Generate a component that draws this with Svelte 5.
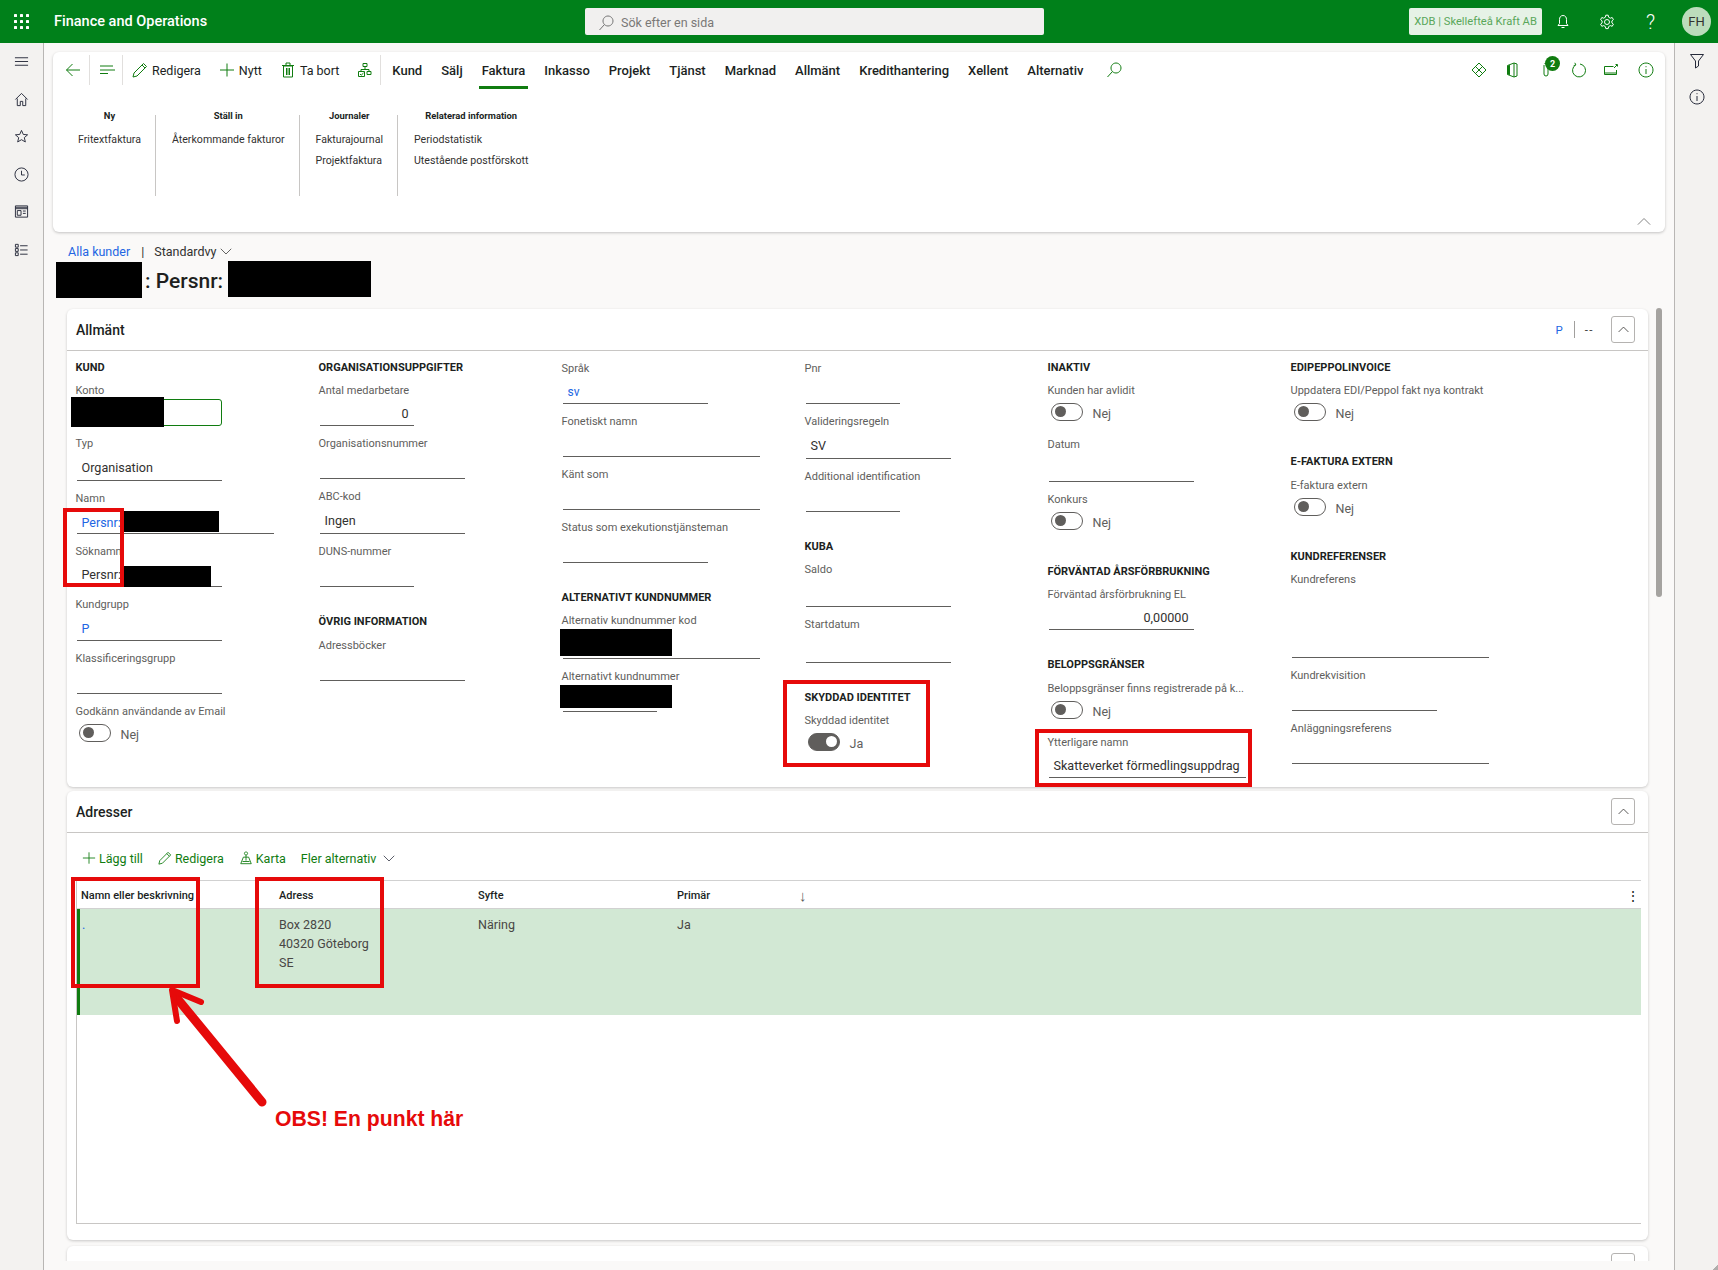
<script>
  const tabs = ['Kund','Sälj','Faktura','Inkasso','Projekt','Tjänst','Marknad','Allmänt','Kredithantering','Xellent','Alternativ'];
  const ribbon = [
    { title:'Ny', items:['Fritextfaktura'] },
    { title:'Ställ in', items:['Återkommande fakturor'] },
    { title:'Journaler', items:['Fakturajournal','Projektfaktura'] },
    { title:'Relaterad information', items:['Periodstatistik','Utestående postförskott'] }
  ];
  const h = (text, mt=26) => ({ t:'h', text, mt });
  const f = (label, o={}) => ({ t:'f', label, mt:9, w:'m', ih:28, ...o });
  const tg = (label, mt=7, val='Nej', on=false) => ({ t:'s', label, mt, val, on });
  const columns = [
    [ h('KUND',0), f('Konto',{mt:7,focus:true,ih:27}), f('Typ',{value:'Organisation',ih:30}),
      f('Namn',{value:'Persnr:',link:true,w:'l'}), f('Söknamn',{value:'Persnr:'}),
      f('Kundgrupp',{value:'P',link:true,ih:29}), f('Klassificeringsgrupp'), tg('Godkänn användande av Email',9) ],
    [ h('ORGANISATIONSUPPGIFTER',0), f('Antal medarbetare',{mt:7,w:'s',value:'0',num:true}), f('Organisationsnummer'),
      f('ABC-kod',{value:'Ingen',ih:30}), f('DUNS-nummer',{w:'s'}), h('ÖVRIG INFORMATION'), f('Adressböcker',{mt:8}) ],
    [ f('Språk',{mt:1,value:'sv',link:true,small:true}), f('Fonetiskt namn',{w:'l'}), f('Känt som',{w:'l'}),
      f('Status som exekutionstjänsteman'), h('ALTERNATIVT KUNDNUMMER'),
      f('Alternativ kundnummer kod',{mt:7,w:'l',ih:31}), f('Alternativt kundnummer',{w:'s'}) ],
    [ f('Pnr',{mt:1,w:'s'}), f('Valideringsregeln',{value:'SV',ih:30}), f('Additional identification',{w:'s'}),
      h('KUBA'), f('Saldo',{mt:7,ih:30}), f('Startdatum',{ih:31}), h('SKYDDAD IDENTITET'),
      tg('Skyddad identitet',7,'Ja',true) ],
    [ h('INAKTIV',0), tg('Kunden har avlidit'), f('Datum',{mt:10,ih:30}), tg('Konkurs',9), h('FÖRVÄNTAD ÅRSFÖRBRUKNING',28),
      f('Förväntad årsförbrukning EL',{mt:7,value:'0,00000',num:true}), h('BELOPPSGRÄNSER'),
      tg('Beloppsgränser finns registrerade på k...',8), f('Ytterligare namn',{mt:10,w:'l',value:'Skatteverket förmedlingsuppdrag'}) ],
    [ h('EDIPEPPOLINVOICE',0), tg('Uppdatera EDI/Peppol fakt nya kontrakt'), h('E-FAKTURA EXTERN',27), tg('E-faktura extern',8),
      h('KUNDREFERENSER',27), f('Kundreferens',{mt:7,w:'l',ih:71}), f('Kundrekvisition'), f('Anläggningsreferens',{w:'l'}) ]
  ];
  const redactions = [
    [56,262,86,36],[228,261,143,36],[71,397,93,30],[123.5,511,95.5,21],[123.5,566,87.5,21],[560,629,112,27],[560,685,112,23]
  ];
  const redBoxes = [
    [63,507.5,60.5,79],[783,680,147,86.5],[1035,729,217,58],[71,877,129,111],[255,877,129,111]
  ];
  const sideIcons = [
    'M1 4h14M1 8h14M1 12h14',
    'M1.5 8 8 1.5 14.5 8M3.5 7v7.5h3.200v-4.500h2.600v4.500h3.200V7',
    'M8 1.500l1.900 4.300 4.600.4-3.500 3 1.100 4.600L8 11.400l-4.100 2.400L5 9.200l-3.500-3 4.600-.4z',
    'M8 1a7 7 0 1 0 0 14A7 7 0 0 0 8 1zM8 4v4.500h3.500',
    'M1.500 2h13v12h-13zM1.500 3.500h13M1.500 5h13M3.500 7h4v5h-4zM9.500 7.500h3M9.500 10h3',
    'M1.500 2.500h3v3h-3zM1.500 7h3v3h-3zM1.500 11.500h3v3h-3zM6.500 4h8M6.500 8.500h8M6.500 13h8'
  ];
  const plus = 'M8 1.500v13M1 8h14';
  const pencil = 'M11.500 1.500l3 3L5 14l-4 1 1-4zM10 3l3 3';
  const info = 'M8 1a7 7 0 1 0 .01 0zM8 7v5M8 4.200v1';
</script>

{#snippet icon(d, cls = '')}
  <svg class="ico {cls}" viewBox="0 0 16 16" aria-hidden="true"><path d={d} /></svg>
{/snippet}

<div class="app">
  <header class="top">
    <svg class="waffle" viewBox="0 0 15 15" aria-hidden="true">
      {#each [1.500,7.500,13.500] as y}
        {#each [1.500,7.500,13.500] as x}<rect x={x-1.500} y={y-1.500} width="3" height="3" rx=".6" />{/each}
      {/each}
    </svg>
    <span class="brand">Finance and Operations</span>
    <div class="search">
      {@render icon('M10 1a5 5 0 1 1-.01 0zM6.300 9.700 1.500 15', 'gray')}
      <span>Sök efter en sida</span>
    </div>
    <button class="company">XDB | Skellefteå Kraft AB</button>
    <div class="topicons">
      {@render icon('M8 1.500c-2.500 0-3.500 2-3.500 4v4L3 11.500h10L11.500 9.500v-4c0-2-1-4-3.500-4zM6.500 13.500h3', 'white')}
      {@render icon('M8 5.500a2.500 2.500 0 1 0 0 5 2.500 2.500 0 0 0 0-5zM6.800 1.200h2.400l.4 2 1.700 1 1.900-.7 1.200 2.100-1.500 1.300v2l1.500 1.300-1.200 2.100-1.900-.7-1.700 1-.4 2H6.800l-.4-2-1.700-1-1.900.7-1.200-2.100 1.500-1.300v-2L1.600 5.600l1.200-2.100 1.900.7 1.700-1z', 'white')}
      <span class="q">?</span>
    </div>
    <div class="avatar">FH</div>
  </header>

  <div class="body">
    <nav class="side">
      {#each sideIcons as d}
        <span class="sidebtn">{@render icon(d, 'navy')}</span>
      {/each}
    </nav>

    <main class="main">
      <section class="ribbon">
        <div class="cmdbar">
          <span class="cmd iconly">{@render icon('M15 8H1.500M7.500 2 1.500 8l6 6', 'green')}</span>
          <span class="vsep"></span>
          <span class="cmd iconly lines">{@render icon('M1 4h13M1 8h15M1 11.500h8', 'green')}</span>
          <span class="vsep"></span>
          <span class="cmd">{@render icon(pencil, 'green')}Redigera</span>
          <span class="cmd">{@render icon(plus, 'green')}Nytt</span>
          <span class="cmd">{@render icon('M3.500 4h9v11h-9zM2 3.500h12M6 1h4v2.500H6zM6.500 6v7M8 6v7M9.500 6v7', 'green')}Ta bort</span>
          <span class="cmd iconly org">{@render icon('M6 1.500h4v3H6zM8 4.500v3M4 9V7.500h8V9M1.500 9.500h6v5h-6zM10 9.500h4v3h-4zM3 12l1.200 1.200L6.500 11', 'green')}</span>
          <span class="vsep last"></span>
          <div class="tabs">
            {#each tabs as t}
              <span class="tab" class:active={t === 'Faktura'}>{t}</span>
            {/each}
          </div>
          <span class="tabsearch">{@render icon('M10 1a5 5 0 1 1-.01 0zM6.300 9.700 1.500 15', 'green')}</span>
          <div class="cmdright">
            {@render icon('M8 1l7 7-7 7-7-7zM4.500 4.500l7 7M11.500 4.500l-7 7', 'green')}
            <svg class="ico green" viewBox="0 0 16 16" aria-hidden="true"><path d="M10 1 3.500 3.500v9L10 15l3-1V2zM10 1v14" /><path class="solid" d="M3.500 3.500 6 3v10l-2.500-.5z" /></svg>
            <span class="clip">
              {@render icon('M6 3v9a2 2 0 0 0 4 0V3.500a3 3 0 0 0-3.500-2', 'green')}
              <b>2</b>
            </span>
            {@render icon('M4.800 .8 5.800 2.800 3.600 3.800M5.800 2.800A6.500 6.500 0 1 0 10 2', 'green')}
            {@render icon('M1.500 4.500h9M1.500 4.500v8h12V8M1.500 11h12M11 6l3-3M12.500 2.500h2v2', 'green')}
            <span class="lastico">{@render icon(info, 'green')}</span>
          </div>
        </div>
        <div class="groups">
          {#each ribbon as g}
            <div class="group">
              <div class="gtitle">{g.title}</div>
              {#each g.items as it}<div class="gitem">{it}</div>{/each}
            </div>
          {/each}
        </div>
        <span class="collapse">{@render icon('M1 11l7-7 7 7', 'gray')}</span>
      </section>

      <div class="crumbs">
        <span class="link">Alla kunder</span><span class="pipe">|</span><span>Standardvy</span>
        {@render icon('M1 5l7 7 7-7', 'dark chev')}
      </div>
      <h1 class="title">: Persnr:</h1>

      <div class="scroll">
        <section class="card">
          <div class="cardhead">
            <h2>Allmänt</h2>
            <div class="summary"><span class="link">P</span><span class="thin"></span><span class="dashes">--</span></div>
            <span class="toggleup">{@render icon('M2 11l6-6 6 6', 'dark')}</span>
          </div>
          <div class="fields">
            {#each columns as col}
              <div class="col">
                {#each col as it}
                  {#if it.t === 'h'}
                    <div class="head" style="margin-top:{it.mt}px">{it.text}</div>
                  {:else if it.t === 's'}
                    <div class="field" style="margin-top:{it.mt}px">
                      <div class="label">{it.label}</div>
                      <div class="switchrow">
                        <span class="switch" class:on={it.on}><i></i></span>
                        <span class="swval">{it.val}</span>
                      </div>
                    </div>
                  {:else}
                    <div class="field" style="margin-top:{it.mt}px">
                      <div class="label">{it.label}</div>
                      <div class="input {it.w}" class:focus={it.focus} class:num={it.num} class:link={it.link} class:small={it.small} style="height:{it.ih}px">{it.value ?? ''}</div>
                    </div>
                  {/if}
                {/each}
              </div>
            {/each}
          </div>
        </section>

        <section class="card second">
          <div class="cardhead">
            <h2>Adresser</h2>
            <span class="toggleup">{@render icon('M2 11l6-6 6 6', 'dark')}</span>
          </div>
          <div class="gridbar">
            <span class="gcmd">{@render icon(plus, 'green')}Lägg till</span>
            <span class="gcmd">{@render icon(pencil, 'green')}Redigera</span>
            <span class="gcmd">{@render icon('M8 1a1.800 1.800 0 1 0 .01 0zM8 4.500V11M5 7h6l3 7.500H2zM4 12h8', 'green')}Karta</span>
            <span class="gcmd">Fler alternativ{@render icon('M1 5l7 7 7-7', 'navy chev')}</span>
          </div>
          <div class="grid">
            <div class="ghead">
              <span>Namn eller beskrivning</span><span>Adress</span><span>Syfte</span><span>Primär</span>
              <span class="sort">↓</span><span class="more">⋮</span>
            </div>
            <div class="grow">
              <span class="link dot">.</span>
              <span class="addr">Box 2820<br />40320 Göteborg<br />SE</span>
              <span>Näring</span>
              <span>Ja</span>
            </div>
          </div>
        </section>

        <section class="card third">
          <div class="cardhead"><h2></h2><span class="toggleup"></span></div>
        </section>
      </div>
      <span class="scrollthumb"></span>
    </main>

    <aside class="rail">
      {@render icon('M1.500 1.500h13L9.500 8v5l-3 2V8z', 'navy')}
      {@render icon(info, 'navy')}
    </aside>
  </div>

  {#each redactions as r}
    <div class="black" style="left:{r[0]}px;top:{r[1]}px;width:{r[2]}px;height:{r[3]}px"></div>
  {/each}
  {#each redBoxes as r}
    <div class="redbox" style="left:{r[0]}px;top:{r[1]}px;width:{r[2]}px;height:{r[3]}px"></div>
  {/each}
  <svg class="arrow" viewBox="0 0 1718 1270" aria-hidden="true">
    <path class="shaft" d="M262 1102 176 997" />
    <path class="headp" d="M201 1002 172 990 177 1021" />
  </svg>
  <div class="obs">OBS! En punkt här</div>
  <div class="corner"></div>
</div>

<style>
  :global(body) { margin: 0; background: #faf9f8; }
  .app {
    position: relative; width: 1718px; height: 1270px; overflow: hidden;
    font-family: Roboto, "Noto Sans", sans-serif; font-size: 13px; color: #323130;
    background: #faf9f8;
  }
  .ico { width: 16px; height: 16px; fill: none; stroke: currentColor; stroke-width: 1; flex: none; display: block; }
  .solid { fill: currentColor; fill-rule: evenodd; stroke: none; }
  .green { color: #107c10; }
  .gray { color: #737373; }
  .white { color: #fff; }
  .dark { color: #323130; }
  .navy { color: #252a3a; }
  .link { color: #2266e3; }

  .top { height: 43px; background: #00801a; display: flex; align-items: center; color: #fff; }
  .waffle { width: 15px; height: 15px; fill: #fff; margin-left: 14px; flex: none; }
  .brand { margin-left: 25px; font-size: 14.500px; font-weight: 500; width: 155px; white-space: nowrap; }
  .search {
    margin-left: 376px; width: 459px; height: 27px; background: #f1f0ef; border-radius: 2px;
    display: flex; align-items: center; color: #7a7876; font-size: 12.500px; box-sizing: border-box; padding: 2px 0 0 13px; gap: 7px;
  }
  .company {
    margin-left: 365px; width: 133px; height: 27px; border: 0; border-radius: 2px; padding: 0;
    background: #e6f2e6; color: #5aa75a; font: 11.200px Roboto, sans-serif; white-space: nowrap;
  }
  .topicons { margin-left: 13px; display: flex; align-items: center; gap: 28px; width: 128px; }
  .q { font-size: 20px; font-weight: 300; margin-left: 3px; line-height: 16px; }
  .avatar {
    position: absolute; left: 1682px; top: 7px; width: 29px; height: 29px; border-radius: 50%;
    background: #bcdcbc; color: #323130; font-size: 13px; display: flex; align-items: center; justify-content: center;
  }

  .body { display: flex; height: 1227px; }
  .side { width: 43px; flex: none; border-right: 1px solid #b8b6b4; background: #f3f2f0; box-sizing: content-box; }
  .sidebtn { height: 37.500px; display: flex; align-items: center; justify-content: center; }
  .sidebtn .ico { width: 15px; height: 15px; }
  .rail {
    width: 43px; flex: none; border-left: 1px solid #b8b6b4; background: #f3f2f0;
    display: flex; flex-direction: column; align-items: center; padding-top: 10px; gap: 20px;
  }
  .main { flex: 1; min-width: 0; display: flex; flex-direction: column; position: relative; }

  .ribbon {
    margin: 9px 9px 0 9px; height: 180px; background: #fff; border-radius: 6px; position: relative;
    box-shadow: 0 1px 3px rgba(0,0,0,.22); flex: none;
  }
  .cmdbar { height: 36px; display: flex; align-items: center; padding-left: 12px; position: relative; font-size: 12.500px; color: #201f1e; }
  .cmd { display: flex; align-items: center; gap: 4px; white-space: nowrap; margin-right: 18px; height: 30px; }
  .cmd.iconly { margin-right: 8px; }
  .cmd.lines { margin-right: 7px; }
  .cmd.org { margin-right: 7px; }
  .vsep { width: 1px; height: 30px; background: #e1dfdd; margin-right: 9px; flex: none; }
  .vsep.last { margin-right: 8px; }
  .tabs { display: flex; gap: 13px; font-weight: 500; font-size: 13px; }
  .tab { position: relative; padding: 0 3px; white-space: nowrap; height: 36px; display: flex; align-items: center; }
  .tab.active::after { content: ''; position: absolute; left: 0; right: 0; bottom: -1px; height: 3px; background: #107c10; }
  .tabsearch { margin-left: 20px; }
  .cmdright { position: absolute; left: 1418px; top: 10px; display: flex; gap: 17px; }
  .clip { position: relative; left: 1px; }
  .clip b {
    position: absolute; left: 7px; top: -6px; width: 15px; height: 15px; border-radius: 50%; background: #107c10; color: #fff;
    font-size: 9px; font-weight: 700; display: flex; align-items: center; justify-content: center;
  }
  .lastico { margin-left: 2px; }
  .groups { display: flex; padding: 27px 0 0 9px; font-size: 10.600px; color: #323130; }
  .group { padding: 0 14px 0 16px; height: 81px; border-right: 1px solid #c8c6c4; box-sizing: border-box; }
  .group:last-child { border-right: 0; }
  .gtitle { font-size: 9.400px; font-weight: 700; text-align: center; height: 14px; line-height: 14px; margin: -6px 0 6px; color: #201f1e; }
  .gitem { height: 21px; line-height: 21px; white-space: nowrap; }
  .collapse { position: absolute; right: 14px; top: 163px; }
  .collapse .ico { width: 14px; height: 14px; }

  .crumbs { margin: 9px 0 0 24px; height: 20px; display: flex; align-items: center; font-size: 12.500px; flex: none; }
  .pipe { margin: 0 10px 0 11px; }
  .chev { width: 12px; height: 12px; margin-left: 4px; }
  .title { margin: 1px 0 0; padding-left: 101px; height: 38px; line-height: 38px; font-size: 21px; font-weight: 500; color: #201f1e; flex: none; }

  .scroll { flex: 1; margin-bottom: 9px; padding: 9px 26px 0 23px; overflow: hidden; min-height: 0; }
  .scrollthumb { position: absolute; left: 1612px; top: 265px; width: 6px; height: 289px; border-radius: 3px; background: #a5a3a0; }
  .card { background: #fff; border-radius: 6px; box-shadow: 0 1px 3px rgba(0,0,0,.2); }
  .second { margin-top: 4px; height: 449px; display: flex; flex-direction: column; }
  .third { margin-top: 6px; height: 100px; }
  .cardhead {
    height: 41px; border-bottom: 1px solid #c8c6c4; display: flex; align-items: center; padding: 0 13px 0 9px; box-sizing: content-box;
  }
  .cardhead h2 { margin: 0; font-size: 14px; font-weight: 500; color: #201f1e; flex: 1; }
  .summary { display: flex; align-items: center; font-size: 11.500px; margin-right: 17px; }
  .dashes { letter-spacing: 1.500px; font-variant-ligatures: none; }
  .thin { width: 1px; height: 17px; background: #a19f9d; margin: 0 10px 0 11px; }
  .toggleup {
    width: 24px; height: 27px; box-sizing: border-box; border: 1px solid #b5b3b1; border-radius: 3px;
    display: flex; align-items: center; justify-content: center;
  }
  .toggleup .ico { width: 13px; height: 13px; }

  .fields { display: grid; grid-template-columns: repeat(6, 243px); padding: 8px 0 9px 8.500px; }
  .col { display: flex; flex-direction: column; align-items: flex-start; min-width: 0; }
  .head { height: 16px; line-height: 18px; font-size: 11px; font-weight: 700; color: #201f1e; white-space: nowrap; }
  .label { height: 16px; line-height: 18px; font-size: 11px; color: #605e5c; white-space: nowrap; }
  .input {
    margin-left: 1px; box-sizing: border-box; border-bottom: 1px solid #605e5c; padding: 3px 5px 0; display: flex; align-items: center;
    font-size: 12.600px; color: #323130; white-space: nowrap;
  }
  .input.s { width: 94px; } .input.m { width: 145px; } .input.l { width: 197px; }
  .input.num { justify-content: flex-end; }
  .input.link { color: #2266e3; font-size: 12.500px; padding-top: 5px; }
  .input.small { font-size: 12px; }
  .input.focus { border: 1px solid #107c10; border-radius: 3px; margin-top: 1px; }
  .switchrow { height: 28px; display: flex; align-items: center; margin-left: 3px; }
  .switch { width: 32px; height: 18px; box-sizing: border-box; border: 1px solid #605e5c; border-radius: 9px; background: #fff; position: relative; }
  .switch i { position: absolute; left: 3px; top: 2px; width: 11px; height: 11px; border-radius: 50%; background: #605e5c; }
  .switch.on { background: #605e5c; }
  .switch.on i { left: 17px; background: #fff; }
  .swval { margin-left: 10px; padding-top: 2px; font-size: 12.500px; color: #605e5c; }

  .gridbar { height: 47px; display: flex; align-items: center; padding: 3px 0 0 15px; gap: 15px; color: #107c10; font-size: 12.500px; box-sizing: border-box; }
  .gcmd { display: flex; align-items: center; gap: 3px; white-space: nowrap; }
  .gcmd .ico { width: 14px; height: 14px; }
  .gcmd .chev { width: 12px; height: 12px; margin-left: 4px; }
  .grid {
    margin: 0 7px 16px 9px; flex: 1; border-top: 1px solid #d1d1d1; border-left: 1px solid #c8c6c4; border-bottom: 1px solid #c8c6c4;
  }
  .ghead, .grow { display: grid; grid-template-columns: 202px 199px 199px 122px 1fr 15px; }
  .ghead { height: 28px; padding-top: 2px; align-items: center; font-size: 11px; font-weight: 500; color: #201f1e; border-bottom: 1px solid #d1d1d1; box-sizing: border-box; }
  .ghead span:first-child, .grow span:first-child { padding-left: 4px; white-space: nowrap; }
  .sort { font-size: 15px; color: #605e5c; }
  .more { font-size: 14px; }
  .grow {
    height: 106px; background: #d2e8d4; box-shadow: inset 3px 0 0 #107c10; font-size: 12.500px; color: #484644; line-height: 19px;
    padding-top: 6px; box-sizing: border-box;
  }
  .dot { padding-left: 5px !important; }

  .black { position: absolute; background: #000; }
  .redbox { position: absolute; box-sizing: border-box; border: 4.500px solid #e60a0a; }
  .arrow { position: absolute; left: 0; top: 0; width: 1718px; height: 1270px; pointer-events: none; fill: none; stroke: #e60a0a; stroke-linecap: round; stroke-linejoin: round; }
  .shaft { stroke-width: 9; }
  .headp { stroke-width: 6; }
  .obs { position: absolute; left: 275px; top: 1107px; font: 700 21.200px/24px "Liberation Sans", sans-serif; color: #e60a0a; white-space: nowrap; }
  .corner { position: absolute; right: 0; bottom: 0; width: 5px; height: 5px; background: linear-gradient(135deg, transparent 50%, #b0aeac 50%); }
</style>
